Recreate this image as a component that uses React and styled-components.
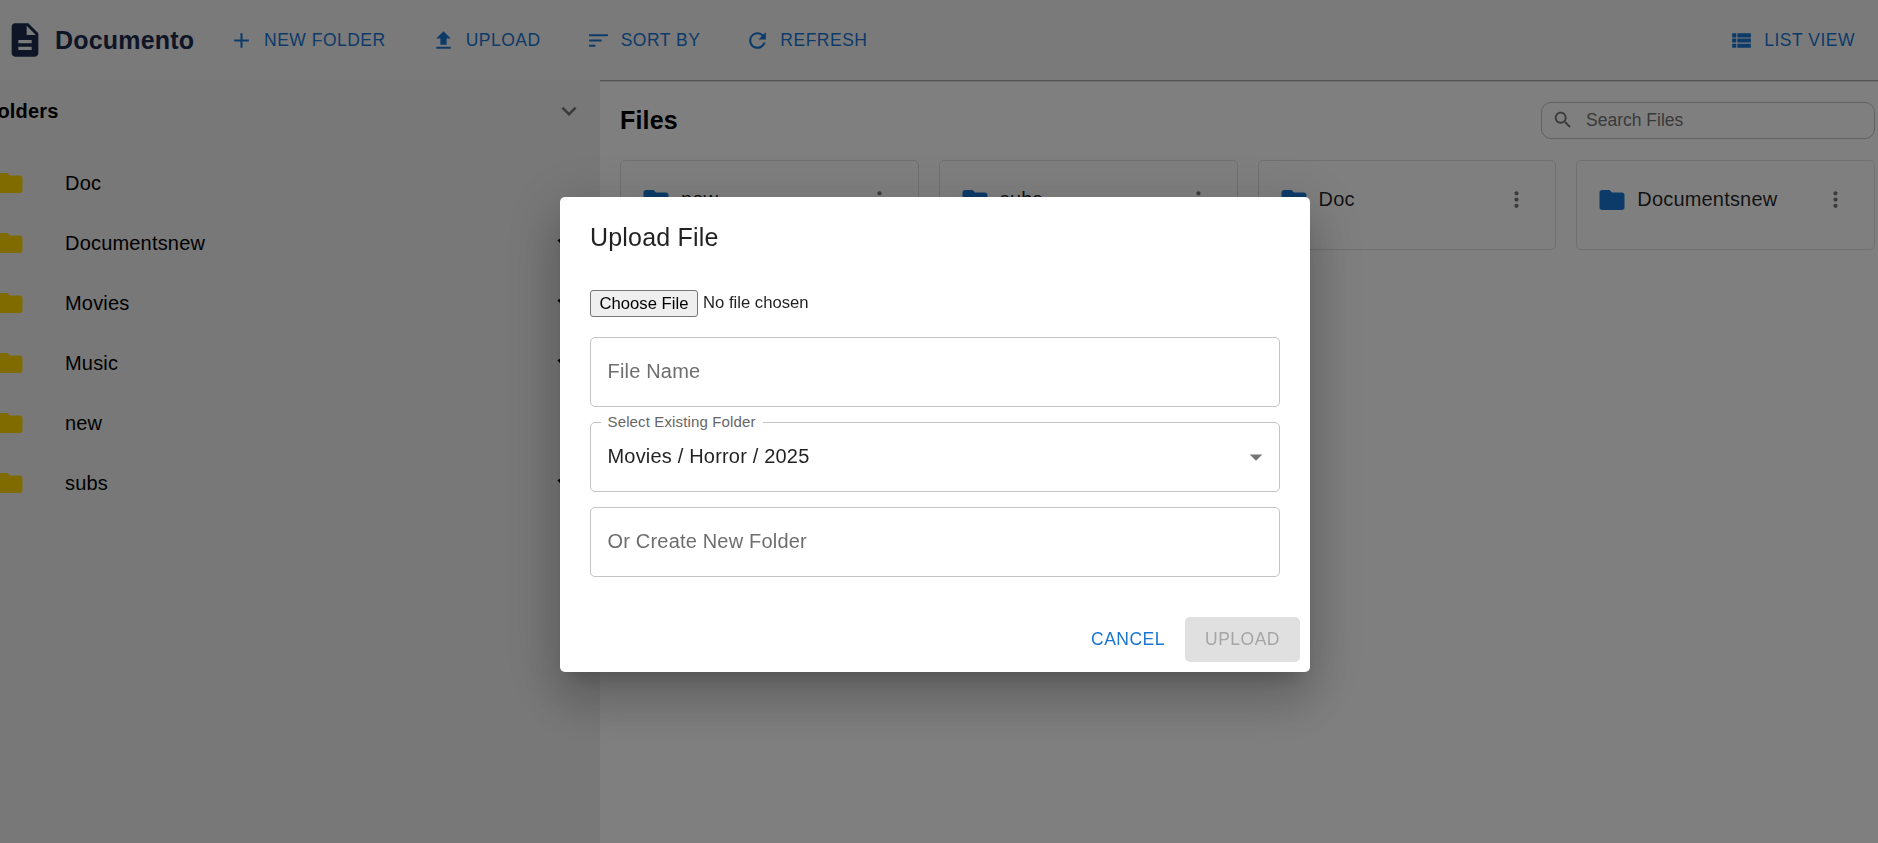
import React from 'react';
import styled, { createGlobalStyle } from 'styled-components';

const GlobalStyle = createGlobalStyle`
  *, *::before, *::after { box-sizing: border-box; }
  html, body { margin: 0; padding: 0; }
  body {
    overflow: hidden;
    background: #fff;
    color: rgba(0, 0, 0, 0.87);
    font-family: Arial, "Liberation Sans", sans-serif;
  }
`;

const ICONS = {
  doc: 'M14 2H6c-1.1 0-1.99.9-1.99 2L4 20c0 1.1.89 2 1.99 2H18c1.1 0 2-.9 2-2V8zm2 16H8v-2h8zm0-4H8v-2h8zm-3-5V3.5L18.5 9z',
  add: 'M19 13h-6v6h-2v-6H5v-2h6V5h2v6h6z',
  upload: 'M5 20h14v-2H5zm0-10h4v6h6v-6h4l-7-7z',
  sort: 'M3 18h6v-2H3zM3 6v2h18V6zm0 7h12v-2H3z',
  refresh:
    'M17.65 6.35C16.2 4.9 14.21 4 12 4c-4.42 0-7.99 3.58-7.99 8s3.57 8 7.99 8c3.73 0 6.84-2.55 7.73-6h-2.08c-.82 2.33-3.04 4-5.65 4-3.31 0-6-2.69-6-6s2.69-6 6-6c1.66 0 3.14.69 4.22 1.78L13 11h7V4z',
  list: 'M3 14h4v-4H3zm0 5h4v-4H3zM3 9h4V5H3zm5 5h13v-4H8zm0 5h13v-4H8zM8 5v4h13V5z',
  folder: 'M10 4H4c-1.1 0-1.99.9-1.99 2L2 18c0 1.1.9 2 2 2h16c1.1 0 2-.9 2-2V8c0-1.1-.9-2-2-2h-8z',
  more: 'M12 8c1.1 0 2-.9 2-2s-.9-2-2-2-2 .9-2 2 .9 2 2 2m0 2c-1.1 0-2 .9-2 2s.9 2 2 2 2-.9 2-2-.9-2-2-2m0 6c-1.1 0-2 .9-2 2s.9 2 2 2 2-.9 2-2-.9-2-2-2',
  search:
    'M15.5 14h-.79l-.28-.27C15.41 12.59 16 11.11 16 9.5 16 5.91 13.09 3 9.5 3S3 5.91 3 9.5 5.91 16 9.5 16c1.61 0 3.09-.59 4.23-1.57l.27.28v.79l5 4.99L20.49 19zm-6 0C7.01 14 5 11.99 5 9.5S7.01 5 9.5 5 14 7.01 14 9.5 11.99 14 9.5 14',
  expand: 'M16.59 8.59 12 13.17 7.41 8.59 6 10l6 6 6-6z',
  dropdown: 'm7 10 5 5 5-5z',
};

const Svg = styled.svg`
  display: block;
  flex: none;
  width: ${(p) => p.$size}px;
  height: ${(p) => p.$size}px;
  fill: ${(p) => p.$color || 'currentColor'};
`;

const Icon = ({ name, size = 30, color }) => (
  <Svg viewBox="0 0 24 24" $size={size} $color={color} aria-hidden="true">
    <path d={ICONS[name]} />
  </Svg>
);

const Page = styled.div`
  display: flex;
  flex-direction: column;
  height: 100vh;
  overflow: hidden;
`;

const Header = styled.header`
  display: flex;
  align-items: center;
  flex: none;
  height: 80px;
  padding: 0 13px 0 5px;
  background: #f5f5f5;
  box-shadow: 0 1px 0 #a8a8a8, 0 2px 0 #e4e4e4;
`;

const Brand = styled.div`
  display: flex;
  align-items: center;
  gap: 10px;
  width: 214px;
  color: #1c2a4d;
  font-size: 25px;
  font-weight: 700;
  letter-spacing: 0.1875px;
`;

const Tools = styled.nav`
  display: flex;
  flex: 1;
  gap: 25px;
`;

const ToolButton = styled.button`
  display: flex;
  align-items: center;
  gap: 10px;
  height: 46px;
  padding: 0 10px;
  border: 0;
  background: none;
  color: #1976d2;
  font: 500 17.5px/30px Arial, "Liberation Sans", sans-serif;
  letter-spacing: 0.5px;
  text-transform: uppercase;
  white-space: nowrap;
`;

const ToolLabel = styled.span`
  padding-bottom: 1px;
`;

const Body = styled.div`
  display: flex;
  flex: 1;
  min-height: 0;
`;

const Sidebar = styled.aside`
  position: relative;
  flex: none;
  width: 600px;
  background: #f0f0f0;
  overflow: hidden;
`;

const SidebarHeader = styled.div`
  display: flex;
  align-items: center;
  justify-content: space-between;
  height: 62px;
  margin-left: -15px;
  padding-right: 16px;
  color: #000;
  font-size: 20px;
  font-weight: 700;
  letter-spacing: 0.1876px;
`;

const FolderList = styled.ul`
  margin: 11px 0 0 -5px;
  padding: 0;
  list-style: none;
`;

const FolderRow = styled.li`
  display: flex;
  align-items: center;
  height: 60px;
  padding-right: 20px;
  color: #000;
  font-size: 20px;
  letter-spacing: 0.1876px;
`;

const FolderName = styled.span`
  flex: 1;
  margin-left: 40px;
`;

const Main = styled.main`
  flex: 1;
  min-width: 0;
  padding: 22px 3px 0 20px;
`;

const MainHeader = styled.div`
  display: flex;
  align-items: center;
  justify-content: space-between;
  height: 37px;
`;

const MainTitle = styled.h2`
  margin: 0;
  color: #000;
  font-size: 25px;
  font-weight: 700;
  letter-spacing: 0.1875px;
`;

const SearchBox = styled.label`
  display: flex;
  align-items: center;
  gap: 12px;
  width: 334px;
  height: 37px;
  padding: 0 0 1px 10px;
  border: 1px solid #c4c4c4;
  border-radius: 10px;
  color: #757575;
  font-size: 17.5px;
`;

const CardGrid = styled.div`
  display: grid;
  grid-template-columns: repeat(4, 1fr);
  gap: 20px;
  margin-top: 21px;
`;

const Card = styled.article`
  display: flex;
  align-items: flex-start;
  height: 90px;
  padding: 24px 26px 0 20px;
  border: 1px solid #e0e0e0;
  border-radius: 5px;
  font-size: 20px;
  line-height: 29px;
  letter-spacing: 0.1876px;
`;

const CardName = styled.span`
  flex: 1;
  margin-left: 10px;
`;

const CardMenu = styled.span`
  padding-top: 2px;
`;

const Overlay = styled.div`
  position: fixed;
  inset: 0;
  display: flex;
  justify-content: center;
  align-items: flex-start;
  padding: 197px 8px 0 0;
  background: rgba(0, 0, 0, 0.5);
`;

const Dialog = styled.section`
  width: 750px;
  height: 475px;
  border-radius: 5px;
  background: #fff;
  box-shadow: 0 13.75px 18.75px -8.75px rgba(0, 0, 0, 0.2), 0 30px 47.5px 3.75px rgba(0, 0, 0, 0.14),
    0 11.25px 57.5px 10px rgba(0, 0, 0, 0.12);
`;

const DialogTitle = styled.h2`
  margin: 0;
  padding: 20px 30px;
  font-size: 25px;
  font-weight: 500;
  line-height: 40px;
  letter-spacing: 0.1875px;
`;

const DialogContent = styled.div`
  display: flex;
  flex-direction: column;
  gap: 15px;
  height: 330px;
  padding: 13px 30px 0;
`;

const FilePicker = styled.div`
  display: flex;
  align-items: flex-start;
  height: 27px;
  margin-bottom: 5px;
  font-size: 16.667px;
  line-height: 25px;
`;

const FileButton = styled.button`
  width: 108px;
  height: 27px;
  margin-right: 5px;
  padding: 0;
  border: 1px solid #767676;
  border-radius: 3px;
  background: #efefef;
  color: #000;
  font: 16.667px/25px Arial, "Liberation Sans", sans-serif;
`;

const Field = styled.div`
  display: flex;
  align-items: center;
  justify-content: space-between;
  position: relative;
  height: 70px;
  padding: 0 7.75px 0 16.5px;
  border: 1px solid #c4c4c4;
  border-radius: 5px;
  color: ${(p) => (p.$filled ? 'rgba(0, 0, 0, 0.87)' : '#6e6e6e')};
  font-size: 20px;
  letter-spacing: 0.1876px;
`;

const FieldText = styled.span`
  padding-bottom: 2px;
`;

const FieldLabel = styled.span`
  position: absolute;
  top: -12px;
  left: 10px;
  padding: 0 7px 0 6.5px;
  background: #fff;
  color: #666;
  font-size: 15px;
  line-height: 21px;
  letter-spacing: 0.14px;
`;

const DialogActions = styled.footer`
  display: flex;
  justify-content: flex-end;
  gap: 10px;
  padding: 10px;
`;

const ActionButton = styled.button`
  height: 45px;
  padding: 0 ${(p) => (p.$contained ? 20 : 10)}px 2px;
  border: 0;
  border-radius: 5px;
  background: ${(p) => (p.$contained ? '#e0e0e0' : 'transparent')};
  color: ${(p) => (p.$contained ? '#a6a6a6' : '#1976d2')};
  font: 500 17.5px/30px Arial, "Liberation Sans", sans-serif;
  letter-spacing: 0.5px;
  text-transform: uppercase;
`;

const tools = [
  ['add', 'New Folder'],
  ['upload', 'Upload'],
  ['sort', 'Sort By'],
  ['refresh', 'Refresh'],
];

const folders = [
  { name: 'Doc' },
  { name: 'Documentsnew', nested: true },
  { name: 'Movies', nested: true },
  { name: 'Music', nested: true },
  { name: 'new' },
  { name: 'subs', nested: true },
];

const files = ['new', 'subs', 'Doc', 'Documentsnew'];

export default function App() {
  return (
    <>
      <GlobalStyle />
      <Page>
        <Header>
          <Brand>
            <Icon name="doc" size={40} />
            Documento
          </Brand>
          <Tools>
            {tools.map(([icon, label]) => (
              <ToolButton key={label}>
                <Icon name={icon} size={25} />
                <ToolLabel>{label}</ToolLabel>
              </ToolButton>
            ))}
          </Tools>
          <ToolButton>
            <Icon name="list" size={25} />
            <ToolLabel>List View</ToolLabel>
          </ToolButton>
        </Header>
        <Body>
          <Sidebar>
            <SidebarHeader>
              Folders
              <Icon name="expand" color="#757575" />
            </SidebarHeader>
            <FolderList>
              {folders.map(({ name, nested }) => (
                <FolderRow key={name}>
                  <Icon name="folder" color="#ffd700" />
                  <FolderName>{name}</FolderName>
                  {nested && <Icon name="expand" />}
                </FolderRow>
              ))}
            </FolderList>
          </Sidebar>
          <Main>
            <MainHeader>
              <MainTitle>Files</MainTitle>
              <SearchBox>
                <Icon name="search" size={22} />
                Search Files
              </SearchBox>
            </MainHeader>
            <CardGrid>
              {files.map((name) => (
                <Card key={name}>
                  <Icon name="folder" color="#1976d2" />
                  <CardName>{name}</CardName>
                  <CardMenu>
                    <Icon name="more" size={25} color="#757575" />
                  </CardMenu>
                </Card>
              ))}
            </CardGrid>
          </Main>
        </Body>
      </Page>
      <Overlay>
        <Dialog role="dialog">
          <DialogTitle>Upload File</DialogTitle>
          <DialogContent>
            <FilePicker>
              <FileButton>Choose File</FileButton>
              No file chosen
            </FilePicker>
            <Field>
              <FieldText>File Name</FieldText>
            </Field>
            <Field $filled>
              <FieldLabel>Select Existing Folder</FieldLabel>
              <FieldText>Movies / Horror / 2025</FieldText>
              <Icon name="dropdown" color="#757575" />
            </Field>
            <Field>
              <FieldText>Or Create New Folder</FieldText>
            </Field>
          </DialogContent>
          <DialogActions>
            <ActionButton>Cancel</ActionButton>
            <ActionButton $contained>Upload</ActionButton>
          </DialogActions>
        </Dialog>
      </Overlay>
    </>
  );
}
